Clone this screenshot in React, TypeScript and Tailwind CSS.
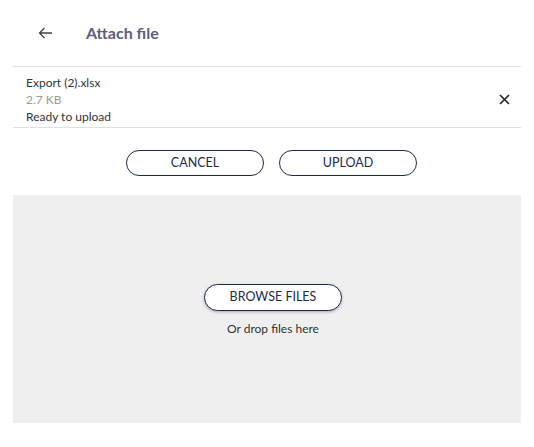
import React from 'react';

export default function App() {
  return (
    <div className="w-[534px] h-[447px] bg-white font-['Lato','Open_Sans',sans-serif] text-[#333]">
      <div className="h-[66px] flex items-center">
        <button className="ml-[37px] w-[16px] h-[16px] flex items-center justify-center text-[#444]">
          <svg width="15" height="12" viewBox="0 0 15 12" fill="none" stroke="currentColor" strokeWidth="1.3">
            <path d="M14 6H1.5M6.5 1L1.5 6l5 5" />
          </svg>
        </button>
        <h1 className="ml-[33px] text-[16px] font-bold text-[#5b5f7d] -mt-[1px]">Attach file</h1>
      </div>

      <div className="mx-[13px] border-t border-b border-[#e0e0e0] flex items-center pt-[7px] pb-[2px]">
        <div className="flex-1 pl-[13px] text-[12px] leading-[17px]">
          <div>Export (2).xlsx</div>
          <div className="text-[#9a9a9a]">2.7 KB</div>
          <div>Ready to upload</div>
        </div>
        <button className="mr-[11px] text-[#222]">
          <svg width="11" height="11" viewBox="0 0 11 11" stroke="currentColor" strokeWidth="1.6">
            <path d="M1 1l9 9M10 1l-9 9" />
          </svg>
        </button>
      </div>

      <div className="flex justify-center gap-[15px] mt-[22px] pl-[9px]">
        <button className="w-[138px] h-[26px] rounded-full border border-[#1c2b4b] text-[12.5px] text-[#1c2b4b]">
          CANCEL
        </button>
        <button className="w-[138px] h-[26px] rounded-full border border-[#1c2b4b] text-[12.5px] text-[#1c2b4b]">
          UPLOAD
        </button>
      </div>

      <div className="mx-[13px] mt-[19px] h-[228px] bg-[#efefef] flex flex-col items-center pt-[89px] pl-[12px]">
        <button className="w-[138px] h-[27px] rounded-full border border-[#1c2b4b] bg-white text-[12.5px] text-[#1c2b4b] shadow-[0_1px_3px_rgba(0,0,0,0.3)]">
          BROWSE FILES
        </button>
        <div className="mt-[9px] text-[12px] text-[#333]">Or drop files here</div>
      </div>
    </div>
  );
}
